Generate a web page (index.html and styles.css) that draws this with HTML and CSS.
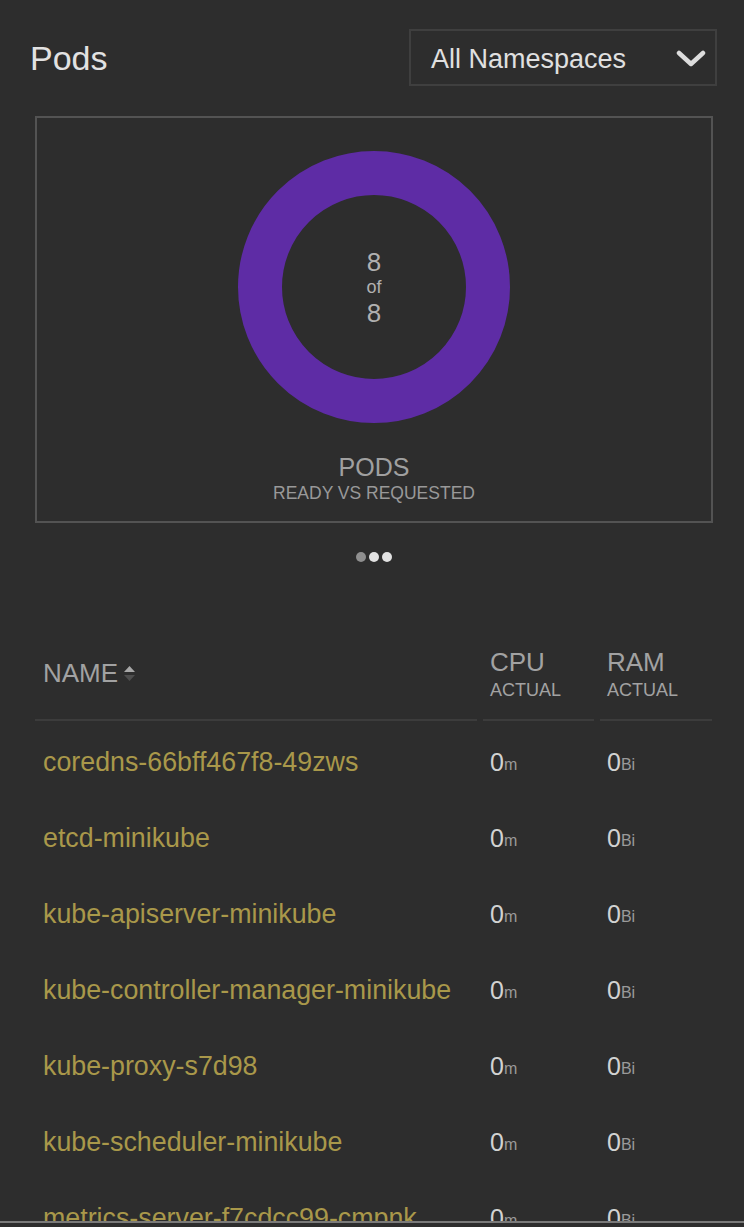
FILE: index.html
```html
<!DOCTYPE html>
<html lang="en">
<head>
<meta charset="utf-8">
<title>Pods</title>
<link rel="stylesheet" href="styles.css">
</head>
<body>
<div class="page">
  <header class="top">
    <h1 class="title">Pods</h1>
    <div class="select">
      <span class="select-label">All Namespaces</span>
      <svg class="chevron" width="30" height="18" viewBox="0 0 30 18" aria-hidden="true">
        <path d="M3 3 L15 14 L27 3" fill="none" stroke="#dcdcdc" stroke-width="4.5" stroke-linecap="round" stroke-linejoin="round"/>
      </svg>
    </div>
  </header>

  <section class="card">
    <div class="donut">
      <svg width="272" height="272" viewBox="0 0 272 272" aria-hidden="true">
        <circle cx="136" cy="136" r="114" fill="none" stroke="#5e2ca5" stroke-width="44"/>
      </svg>
      <div class="donut-text">
        <span class="big">8</span>
        <span class="small">of</span>
        <span class="big">8</span>
      </div>
    </div>
    <div class="card-title">PODS</div>
    <div class="card-sub">READY VS REQUESTED</div>
  </section>

  <div class="dots">
    <span class="dot dim"></span>
    <span class="dot"></span>
    <span class="dot"></span>
  </div>

  <div class="table">
    <div class="th th-name">
      <span>NAME</span>
      <span class="sort">
        <svg width="13" height="17" viewBox="0 0 13 17" aria-hidden="true">
          <path d="M1 7 L6.5 1 L12 7 Z" fill="#a8a8a8"/>
          <path d="M1 10 L6.5 16 L12 10 Z" fill="#4e4e4e"/>
        </svg>
      </span>
    </div>
    <div class="th th-metric"><span class="th-main">CPU</span><span class="th-sub">ACTUAL</span></div>
    <div class="th th-metric"><span class="th-main">RAM</span><span class="th-sub">ACTUAL</span></div>

    <div class="td name">coredns-66bff467f8-49zws</div>
    <div class="td val">0<small>m</small></div>
    <div class="td val">0<small>Bi</small></div>

    <div class="td name">etcd-minikube</div>
    <div class="td val">0<small>m</small></div>
    <div class="td val">0<small>Bi</small></div>

    <div class="td name">kube-apiserver-minikube</div>
    <div class="td val">0<small>m</small></div>
    <div class="td val">0<small>Bi</small></div>

    <div class="td name">kube-controller-manager-minikube</div>
    <div class="td val">0<small>m</small></div>
    <div class="td val">0<small>Bi</small></div>

    <div class="td name">kube-proxy-s7d98</div>
    <div class="td val">0<small>m</small></div>
    <div class="td val">0<small>Bi</small></div>

    <div class="td name">kube-scheduler-minikube</div>
    <div class="td val">0<small>m</small></div>
    <div class="td val">0<small>Bi</small></div>

    <div class="td name">metrics-server-f7cdcc99-cmpnk</div>
    <div class="td val">0<small>m</small></div>
    <div class="td val">0<small>Bi</small></div>
  </div>
</div>
</body>
</html>
```

FILE: styles.css
```css
* { box-sizing: border-box; }

html, body {
  margin: 0;
  padding: 0;
  background: #2d2d2d;
}

body {
  font-family: "Liberation Sans", Arial, sans-serif;
  color: #dddddd;
}

.page {
  height: 1223px;
  overflow: hidden;
  border-bottom: 2px solid #7a7a7a;
}

.top {
  display: flex;
  align-items: center;
  justify-content: space-between;
  padding: 29px 27px 0 30px;
}

.title {
  margin: 0;
  font-size: 34px;
  font-weight: normal;
  color: #e2e2e2;
  line-height: 1;
}

.select {
  width: 308px;
  height: 57px;
  border: 2px solid #3f3f3f;
  display: flex;
  align-items: center;
  justify-content: space-between;
  padding: 0 9px 0 20px;
}

.select-label {
  font-size: 27px;
  color: #e0e0e0;
  margin-top: 3px;
}

.chevron { display: block; margin-top: 2px; }

.card {
  margin: 30px 31px 0 35px;
  height: 407px;
  border: 2px solid #535353;
  display: flex;
  flex-direction: column;
  align-items: center;
  padding-top: 33px;
}

.donut {
  position: relative;
  width: 272px;
  height: 272px;
}

.donut svg { display: block; }

.donut-text {
  position: absolute;
  inset: 0;
  display: flex;
  flex-direction: column;
  align-items: center;
  justify-content: center;
  color: #b0b0b0;
  line-height: 1;
}

.donut-text .big { font-size: 26px; }
.donut-text .small { font-size: 18px; margin: 3px 0 4px; }

.card-title {
  margin-top: 32px;
  font-size: 25px;
  color: #a0a0a0;
  line-height: 1;
}

.card-sub {
  margin-top: 5px;
  font-size: 17.5px;
  color: #999999;
  line-height: 1;
}

.dots {
  display: flex;
  justify-content: center;
  gap: 3px;
  margin-top: 29px;
  padding-left: 3px;
}

.dot {
  width: 10px;
  height: 10px;
  border-radius: 50%;
  background: #e2e2e2;
}

.dot.dim { background: #8f8f8f; }

.table {
  margin: 79px 32px 0 35px;
  display: grid;
  grid-template-columns: 442px 111px 112px;
  column-gap: 6px;
}

.th {
  height: 80px;
  padding: 0 7px 14px;
  border-bottom: 2px solid #3c3c3c;
  display: flex;
  color: #a2a2a2;
}

.th-name {
  align-items: center;
  font-size: 26px;
  padding-left: 8px;
}

.sort {
  display: flex;
  margin-left: 5px;
  margin-top: 1px;
}

.sort svg { display: block; }

.th-metric {
  flex-direction: column;
  justify-content: center;
  line-height: 1;
}

.th-main { font-size: 26px; margin-top: 2px; }
.th-sub { font-size: 18px; margin-top: 6px; }

.td {
  height: 76px;
  padding: 6px 7px 0;
  display: flex;
  align-items: center;
  white-space: nowrap;
}

.td.name {
  padding-left: 8px;
  font-size: 26.8px;
  color: #a9984a;
}

.td.val {
  font-size: 25px;
  color: #d2d2d2;
  align-items: center;
}

.td.val small {
  font-size: 16px;
  color: #9a9a9a;
  align-self: center;
  margin-top: 6px;
}
```
